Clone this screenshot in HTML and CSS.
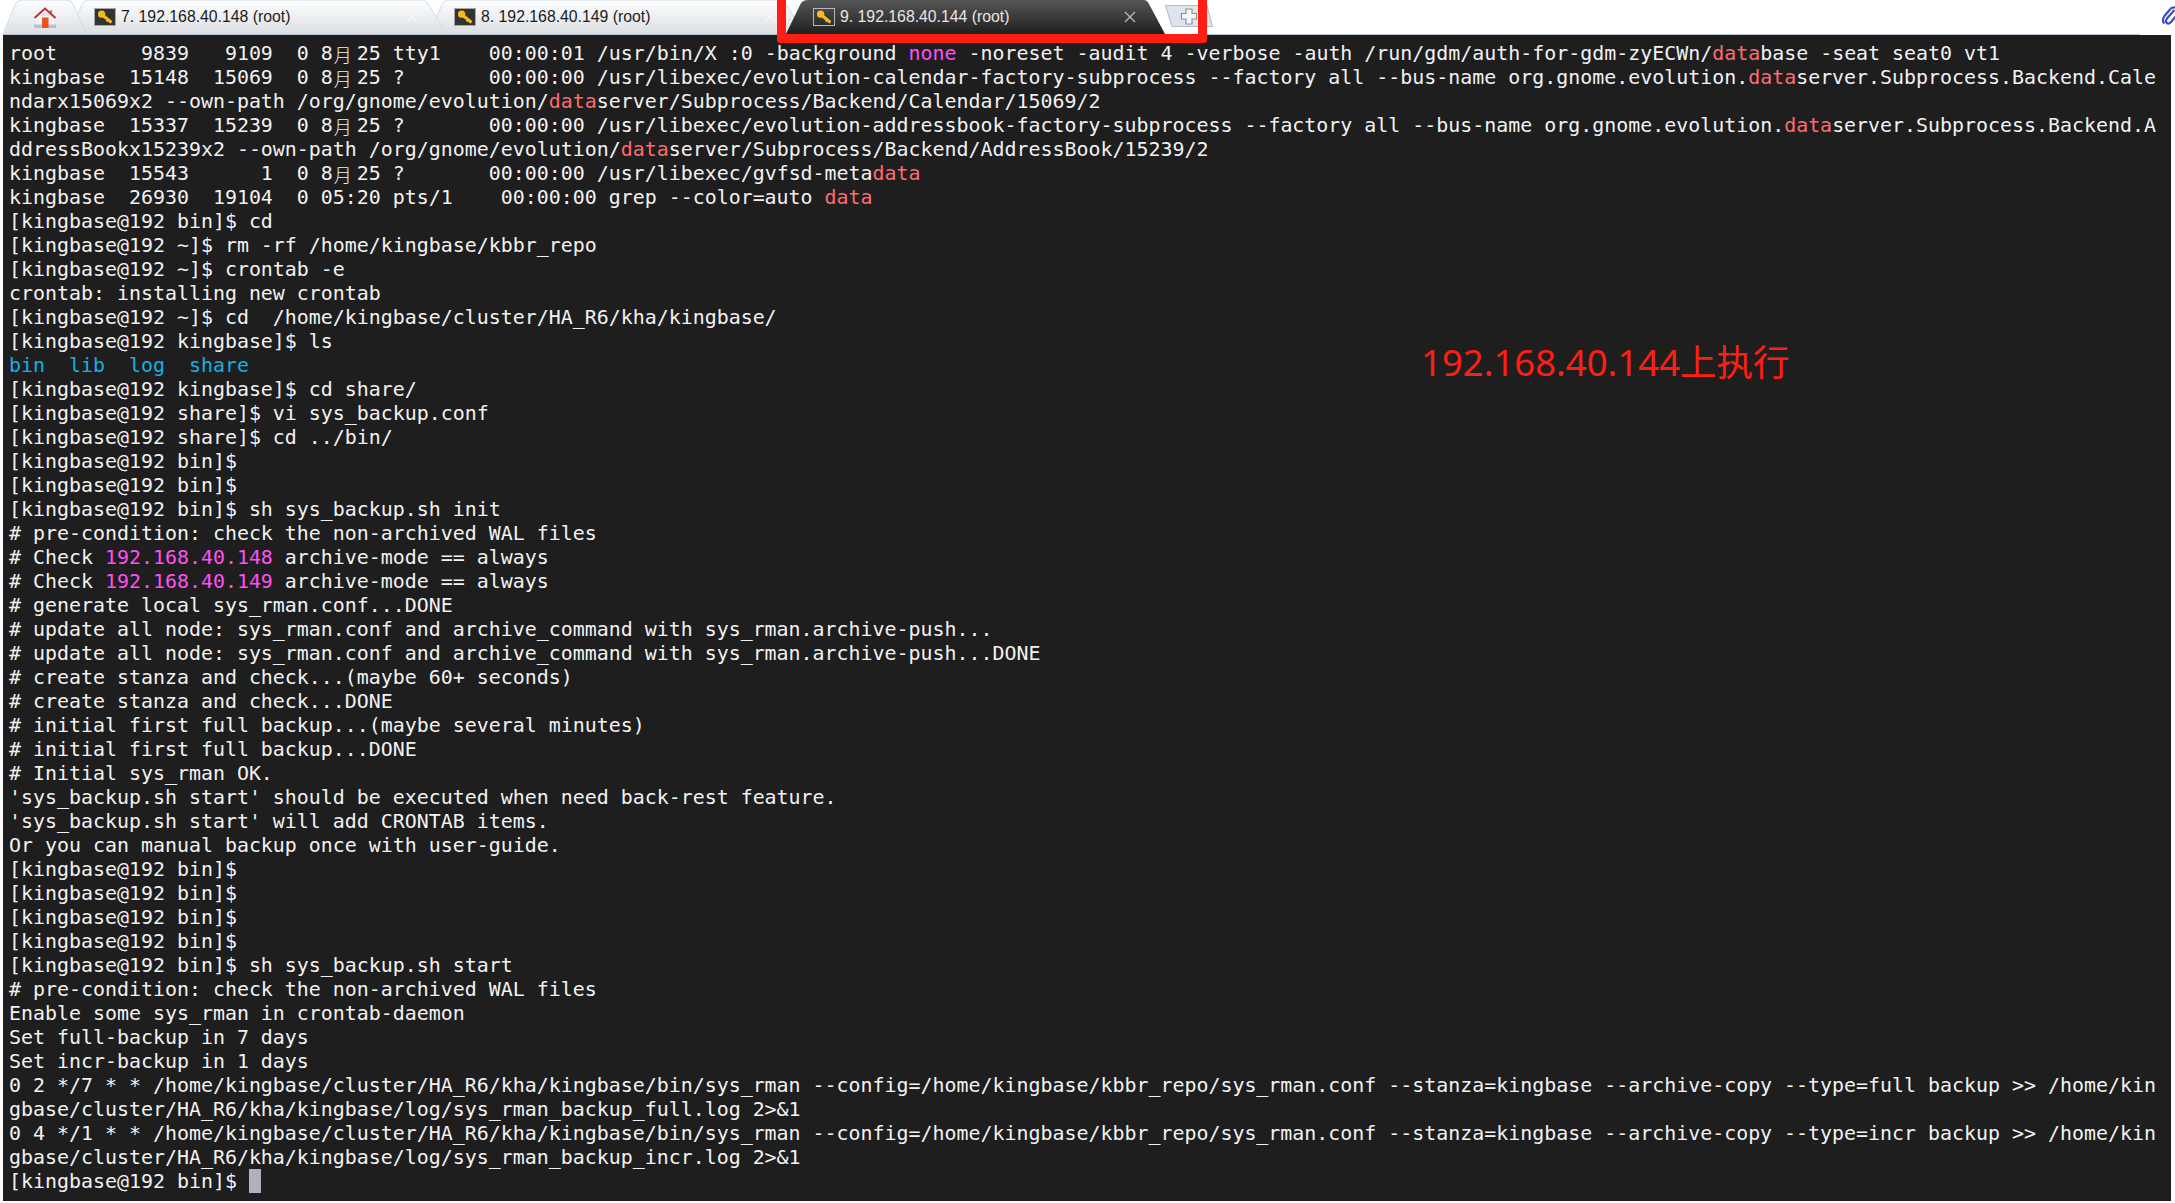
FILE: index.html
```html
<!DOCTYPE html>
<html lang="zh-CN">
<head>
<meta charset="utf-8">
<title>Xshell</title>
<link rel="stylesheet" href="styles.css">
</head>
<body>
<svg class="defs" width="0" height="0" aria-hidden="true">
  <defs>
    <linearGradient id="tabLight" x1="0" y1="0" x2="0" y2="1">
      <stop offset="0" stop-color="#fefefe"/>
      <stop offset="1" stop-color="#dcdfe3"/>
    </linearGradient>
    <linearGradient id="tabDark" x1="0" y1="0" x2="0" y2="1">
      <stop offset="0" stop-color="#565656"/>
      <stop offset="1" stop-color="#1f1f1f"/>
    </linearGradient>
    <symbol id="key" viewBox="0 0 22 18">
      <path class="key-shaft" d="M9 7.5 L17.5 14.5"/>
      <path class="key-shaft thin" d="M14 12 L12.6 13.6"/>
      <circle class="key-bow" cx="7.6" cy="6.2" r="3.6"/>
    </symbol>
    <symbol id="close" viewBox="0 0 12 12">
      <path d="M1 1 L11 11 M11 1 L1 11"/>
    </symbol>
  </defs>
</svg>

<header class="tabbar">
  <div class="tab tab-home">
    <svg class="tab-shape" viewBox="0 0 84 34" preserveAspectRatio="none"><path class="shape-light" d="M0 34 L12 5 Q14 0 20 0 L64 0 Q68 0 70 4 L84 34 Z"/></svg>
    <svg class="home-icon" viewBox="0 0 24 22">
      <path d="M3 11 L12 3 L21 11 V18 H3 Z" fill="#f1f2f6"/>
      <path d="M17 3 H19 V7 L17 5.2 Z" fill="#8a8fa6"/>
      <path d="M1.5 11 L12 1.5 L22.5 11" fill="none" stroke="#c2303a" stroke-width="2"/>
      <rect x="1" y="17.5" width="22" height="3.5" fill="#b4bde8"/>
      <rect x="9" y="10.5" width="6.5" height="10.5" fill="#f0521a"/>
      <rect x="8" y="6" width="8" height="3" fill="#dfe2ee"/>
    </svg>
  </div>
  <div class="tab tab-7">
    <svg class="tab-shape" viewBox="0 0 379 34" preserveAspectRatio="none"><path class="shape-light" d="M0 34 L14 5 Q16 0 22 0 L355 0 Q358 0 360 4 L379 34 Z"/></svg>
    <span class="key-box"><svg class="key"><use href="#key"/></svg></span>
    <span class="tab-title">7. 192.168.40.148 (root)</span>
    <svg class="tab-close"><use href="#close"/></svg>
  </div>
  <div class="tab tab-8">
    <svg class="tab-shape" viewBox="0 0 377 34" preserveAspectRatio="none"><path class="shape-light" d="M0 34 L14 5 Q16 0 22 0 L353 0 Q356 0 358 4 L377 34 Z"/></svg>
    <span class="key-box"><svg class="key"><use href="#key"/></svg></span>
    <span class="tab-title">8. 192.168.40.149 (root)</span>
    <svg class="tab-close"><use href="#close"/></svg>
  </div>
  <div class="tab tab-active">
    <svg class="tab-shape" viewBox="0 0 379 34" preserveAspectRatio="none"><path class="shape-dark" d="M0 34 L14 5 Q16 0 22 0 L358 0 Q361 0 363 4 L379 34 Z"/></svg>
    <span class="key-box"><svg class="key"><use href="#key"/></svg></span>
    <span class="tab-title">9. 192.168.40.144 (root)</span>
    <svg class="tab-close"><use href="#close"/></svg>
  </div>
  <svg class="new-tab" viewBox="0 0 48 22">
    <path d="M0.5 0.5 H42 L47.5 21.5 H7 Z" fill="#dde4ee" stroke="#aebccb"/>
    <path d="M21 4 H27 V8.5 H31.5 V14 H27 V19 H21 V14 H16.5 V8.5 H21 Z" fill="#f6f7f9" stroke="#8e949a" stroke-width="1.2"/>
  </svg>
  <svg class="clip" viewBox="0 0 14 20">
    <path d="M12.5 4 L5 12.5 Q3 15.5 4.8 17 Q6.8 18.5 9 16 L14 10 M13 1.5 Q9.5 1 7.5 4 L2.5 10 Q-0.5 14.5 2.2 17.6" fill="none" stroke="#3a50c4" stroke-width="2.2"/>
  </svg>
  <div class="tab-mark" aria-hidden="true"></div>
</header>

<main class="terminal">
<div class="screen">
<div class="row">root       9839   9109  0 8<span class="cjk">月</span>25 tty1    00:00:01 /usr/bin/X :0 -background <span class="m">none</span> -noreset -audit 4 -verbose -auth /run/gdm/auth-for-gdm-zyECWn/<span class="r">data</span>base -seat seat0 vt1</div>
<div class="row">kingbase  15148  15069  0 8<span class="cjk">月</span>25 ?       00:00:00 /usr/libexec/evolution-calendar-factory-subprocess --factory all --bus-name org.gnome.evolution.<span class="r">data</span>server.Subprocess.Backend.Cale</div>
<div class="row">ndarx15069x2 --own-path /org/gnome/evolution/<span class="r">data</span>server/Subprocess/Backend/Calendar/15069/2</div>
<div class="row">kingbase  15337  15239  0 8<span class="cjk">月</span>25 ?       00:00:00 /usr/libexec/evolution-addressbook-factory-subprocess --factory all --bus-name org.gnome.evolution.<span class="r">data</span>server.Subprocess.Backend.A</div>
<div class="row">ddressBookx15239x2 --own-path /org/gnome/evolution/<span class="r">data</span>server/Subprocess/Backend/AddressBook/15239/2</div>
<div class="row">kingbase  15543      1  0 8<span class="cjk">月</span>25 ?       00:00:00 /usr/libexec/gvfsd-meta<span class="r">data</span></div>
<div class="row">kingbase  26930  19104  0 05:20 pts/1    00:00:00 grep --color=auto <span class="r">data</span></div>
<div class="row">[kingbase@192 bin]$ cd</div>
<div class="row">[kingbase@192 ~]$ rm -rf /home/kingbase/kbbr_repo</div>
<div class="row">[kingbase@192 ~]$ crontab -e</div>
<div class="row">crontab: installing new crontab</div>
<div class="row">[kingbase@192 ~]$ cd  /home/kingbase/cluster/HA_R6/kha/kingbase/</div>
<div class="row">[kingbase@192 kingbase]$ ls</div>
<div class="row"><span class="b">bin</span>  <span class="b">lib</span>  <span class="b">log</span>  <span class="b">share</span></div>
<div class="row">[kingbase@192 kingbase]$ cd share/</div>
<div class="row">[kingbase@192 share]$ vi sys_backup.conf</div>
<div class="row">[kingbase@192 share]$ cd ../bin/</div>
<div class="row">[kingbase@192 bin]$</div>
<div class="row">[kingbase@192 bin]$</div>
<div class="row">[kingbase@192 bin]$ sh sys_backup.sh init</div>
<div class="row"># pre-condition: check the non-archived WAL files</div>
<div class="row"># Check <span class="m">192.168.40.148</span> archive-mode == always</div>
<div class="row"># Check <span class="m">192.168.40.149</span> archive-mode == always</div>
<div class="row"># generate local sys_rman.conf...DONE</div>
<div class="row"># update all node: sys_rman.conf and archive_command with sys_rman.archive-push...</div>
<div class="row"># update all node: sys_rman.conf and archive_command with sys_rman.archive-push...DONE</div>
<div class="row"># create stanza and check...(maybe 60+ seconds)</div>
<div class="row"># create stanza and check...DONE</div>
<div class="row"># initial first full backup...(maybe several minutes)</div>
<div class="row"># initial first full backup...DONE</div>
<div class="row"># Initial sys_rman OK.</div>
<div class="row">'sys_backup.sh start' should be executed when need back-rest feature.</div>
<div class="row">'sys_backup.sh start' will add CRONTAB items.</div>
<div class="row">Or you can manual backup once with user-guide.</div>
<div class="row">[kingbase@192 bin]$</div>
<div class="row">[kingbase@192 bin]$</div>
<div class="row">[kingbase@192 bin]$</div>
<div class="row">[kingbase@192 bin]$</div>
<div class="row">[kingbase@192 bin]$ sh sys_backup.sh start</div>
<div class="row"># pre-condition: check the non-archived WAL files</div>
<div class="row">Enable some sys_rman in crontab-daemon</div>
<div class="row">Set full-backup in 7 days</div>
<div class="row">Set incr-backup in 1 days</div>
<div class="row">0 2 */7 * * /home/kingbase/cluster/HA_R6/kha/kingbase/bin/sys_rman --config=/home/kingbase/kbbr_repo/sys_rman.conf --stanza=kingbase --archive-copy --type=full backup &gt;&gt; /home/kin</div>
<div class="row">gbase/cluster/HA_R6/kha/kingbase/log/sys_rman_backup_full.log 2&gt;&amp;1</div>
<div class="row">0 4 */1 * * /home/kingbase/cluster/HA_R6/kha/kingbase/bin/sys_rman --config=/home/kingbase/kbbr_repo/sys_rman.conf --stanza=kingbase --archive-copy --type=incr backup &gt;&gt; /home/kin</div>
<div class="row">gbase/cluster/HA_R6/kha/kingbase/log/sys_rman_backup_incr.log 2&gt;&amp;1</div>
<div class="row">[kingbase@192 bin]$ <span class="cursor"></span></div>
</div>
<p class="note">192.168.40.144上执行</p>
</main>
</body>
</html>
```

FILE: styles.css
```css
* {
  box-sizing: border-box;
}

html,
body {
  margin: 0;
  height: 100%;
  overflow: hidden;
  background: #fcfcfc;
}

body {
  display: flex;
  flex-direction: column;
  height: 1203px;
}

.defs {
  position: absolute;
}

/* Tab strip */
.tabbar {
  position: relative;
  display: flex;
  flex: none;
  align-items: stretch;
  height: 35px;
  padding-left: 3px;
  padding-bottom: 1px;
  background: #fff;
  font-family: "Liberation Sans", Arial, sans-serif;
  z-index: 2;
}

.tabbar::after {
  content: "";
  position: absolute;
  left: 3px;
  top: 34px;
  width: 2137px;
  height: 1px;
  background: #b9c4d0;
}

.tab {
  position: relative;
  display: flex;
  flex: none;
  align-items: center;
  gap: 5px;
  padding: 0 29px 0 26px;
}

.tab-home {
  width: 84px;
  z-index: 5;
  padding: 0 0 0 30px;
}

.tab-7 {
  width: 379px;
  margin-left: -19px;
  z-index: 4;
}

.tab-8 {
  width: 377px;
  margin-left: -19px;
  z-index: 3;
}

.tab-active {
  width: 379px;
  margin-left: -19px;
  z-index: 6;
  padding-left: 27px;
}

.tab-shape {
  position: absolute;
  left: 0;
  top: 0;
  width: 100%;
  height: 100%;
}

.shape-light {
  fill: url(#tabLight);
  stroke: #cfdbe8;
  stroke-width: 1;
}

.shape-dark {
  fill: url(#tabDark);
}

.home-icon {
  position: relative;
  width: 24px;
  height: 22px;
  margin-top: 1px;
}

.key-box {
  position: relative;
  display: flex;
  flex: none;
  width: 22px;
  height: 18px;
  background: #333;
  border: 1px solid #a8a8a8;
}

.tab-active .key-box {
  background: transparent;
  border-color: #b8b8b8;
}

.key {
  position: absolute;
  left: -1px;
  top: -1px;
  width: 22px;
  height: 18px;
}

.key-shaft {
  fill: none;
  stroke: #f6bb1e;
  stroke-width: 3;
}

.key-shaft.thin {
  stroke-width: 1.6;
}

.key-bow {
  fill: #f6bb1e;
}

.tab-title {
  position: relative;
  font-size: 15.8px;
  line-height: 20px;
  color: #1c1c1c;
  white-space: nowrap;
}

.tab-active .tab-title {
  color: #e6e6e6;
}

.tab-close {
  position: relative;
  flex: none;
  width: 12px;
  height: 12px;
  margin-left: auto;
  fill: none;
  stroke: #f6f6f6;
  stroke-width: 1.2;
}

.tab-active .tab-close {
  stroke: #bdbdbd;
}

.new-tab {
  flex: none;
  width: 48px;
  height: 22px;
  margin-top: 5px;
}

/* Red annotation frame over the active tab */
.tab-mark {
  position: absolute;
  left: 777px;
  top: -10px;
  width: 430px;
  height: 53px;
  border: 9px solid #fe1e12;
  border-radius: 3px;
  z-index: 9;
}

.clip {
  position: absolute;
  left: 2162px;
  top: 6px;
  width: 14px;
  height: 20px;
}

/* Terminal */
.terminal {
  position: relative;
  flex: none;
  width: 2168px;
  height: 1166px;
  margin-left: 3px;
  padding: 7px 0 0 6px;
  background: #1e1e1e;
}

.screen {
  font-family: "DejaVu Sans Mono", "Noto Sans CJK SC", monospace;
  font-size: 19.93px;
  color: #f2f2f2;
}

.row {
  height: 24px;
  line-height: 24px;
  white-space: pre;
}

.cjk {
  display: inline-block;
  width: 24px;
  height: 24px;
  font-family: "Noto Sans CJK SC", sans-serif;
  font-size: 18px;
  font-weight: 300;
  line-height: 24px;
  vertical-align: top;
  text-align: left;
  padding-left: 1px;
}

.r {
  color: #ff6a6e;
}

.m {
  color: #ff4ff5;
}

.b {
  color: #17aee6;
}

.cursor {
  display: inline-block;
  width: 12px;
  height: 24px;
  margin-top: -1px;
  vertical-align: top;
  background: #b2b0bc;
}

.note {
  position: absolute;
  left: 1418px;
  top: 303px;
  margin: 0;
  font-family: "Noto Sans", "Noto Sans CJK SC", sans-serif;
  font-size: 36.5px;
  line-height: 48px;
  color: #fe1e12;
  white-space: nowrap;
}
```
